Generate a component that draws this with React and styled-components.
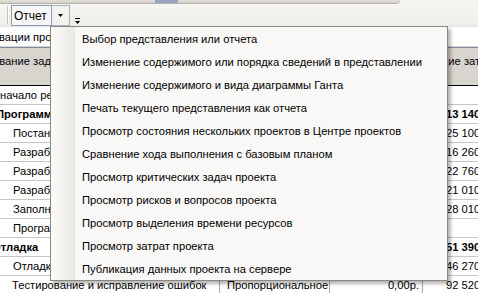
import React from 'react'
import styled, { createGlobalStyle } from 'styled-components'

const GlobalStyle = createGlobalStyle`
  html, body {
    margin: 0;
    padding: 0;
    background: #fff;
  }
  body {
    font-family: 'Liberation Sans', Arial, sans-serif;
    font-size: 11.2px;
    color: #000;
    overflow: hidden;
  }
`

const Screen = styled.div`
  position: relative;
  width: 478px;
  height: 293px;
  overflow: hidden;
  background: #fff;
`

const TopStrip = styled.div`
  height: 4px;
  background: #f4f3ef;
`

const PrevBar = styled.div`
  width: 400px;
  height: 3px;
  background: linear-gradient(#e2e0da, #d3d0c8);
  border-bottom: 1px solid #b5b2a8;
  border-bottom-right-radius: 4px;
  display: flex;
`

const PrevBarMark = styled.div`
  margin-left: 155px;
  width: 23px;
  height: 3px;
  background: #98a3bd;
`

const Toolbar = styled.div`
  height: 21px;
  display: flex;
  align-items: flex-start;
  padding: 1px 0 0 7px;
  background: linear-gradient(#f6f5f1, #eeede8);
  border-bottom: 1px solid #e4e2dc;
`

const Grip = styled.div`
  width: 0;
  height: 18px;
  margin-top: 1px;
  border-left: 1px solid #c6c3b9;
  border-right: 1px solid #fff;
`

const Combo = styled.div`
  margin-left: 2px;
  width: 37px;
  height: 19px;
  padding-left: 2px;
  border: 1px solid #8d9db6;
  background: #f7f7f7;
  display: flex;
  align-items: center;
  font-size: 12px;
`

const DropButton = styled.div`
  width: 17px;
  height: 19px;
  border: 1px solid #a9b2c2;
  border-left: none;
  background: #f3f2ee;
  display: flex;
  align-items: center;
  justify-content: center;
`

const Chevron = styled.div`
  margin: 13px 0 0 4px;
  width: 7px;
  height: 7px;
  display: flex;
`

const Sheet = styled.div`
  display: flex;
  flex-direction: column;
`

const EntryRow = styled.div`
  height: 19px;
  border-bottom: 1px solid #d6d4cf;
  display: flex;
  align-items: center;
  white-space: nowrap;
  overflow: hidden;
`

const HeaderRow = styled.div`
  height: 37px;
  border-top: 1px solid #7d8aa0;
  background: #d8d5cf;
  display: flex;
  white-space: nowrap;
  overflow: hidden;
`

const HeaderCell = styled.div`
  width: ${(p) => p.w}px;
  flex: ${(p) => (p.w ? 'none' : 1)};
  padding-top: 7px;
  padding-left: ${(p) => p.pad || 0}px;
  overflow: hidden;
`

const Row = styled.div`
  height: ${(p) => p.h || 19}px;
  box-sizing: border-box;
  border-bottom: 1px solid #c9c7c2;
  border-top: ${(p) => (p.active ? '1px solid #000' : 'none')};
  display: flex;
  align-items: stretch;
  white-space: nowrap;
  flex: none;
`

const Cell = styled.div`
  width: ${(p) => p.w}px;
  flex: ${(p) => (p.w ? 'none' : 1)};
  box-sizing: border-box;
  display: flex;
  align-items: center;
  justify-content: ${(p) => (p.right ? 'flex-end' : 'flex-start')};
  padding-left: ${(p) => p.indent || 0}px;
  padding-right: ${(p) => (p.right ? 3 : 0)}px;
  border-right: ${(p) => (p.line ? '1px solid #a9a7a2' : 'none')};
  font-weight: ${(p) => (p.bold ? 700 : 400)};
  overflow: hidden;
`

const Shifted = styled.span`
  margin-left: ${(p) => p.shift || 0}px;
`

const Menu = styled.div`
  position: absolute;
  left: 50px;
  top: 26px;
  width: 396px;
  border: 1px solid #8a877e;
  background: #f9f8f6;
  box-shadow: 3px 3px 3px rgba(0, 0, 0, 0.28);
  display: flex;
  flex-direction: column;
`

const MenuItem = styled.div`
  height: 23px;
  display: flex;
  align-items: center;
  background: linear-gradient(90deg, #fbfbf9 0px, #ebe9e3 24px, transparent 24px);
  white-space: nowrap;
`

const MenuText = styled.span`
  padding-left: 31px;
`

const menuItems = [
  'Выбор представления или отчета',
  'Изменение содержимого или порядка сведений в представлении',
  'Изменение содержимого и вида диаграммы Ганта',
  'Печать текущего представления как отчета',
  'Просмотр состояния нескольких проектов в Центре проектов',
  'Сравнение хода выполнения с базовым планом',
  'Просмотр критических задач проекта',
  'Просмотр рисков и вопросов проекта',
  'Просмотр выделения времени ресурсов',
  'Просмотр затрат проекта',
  'Публикация данных проекта на сервере',
]

const rows = [
  { name: 'Программирование', bold: true, shift: -4, cost: '13 140,00р.' },
  { name: 'Постановка задачи', indent: 13, cost: '25 100,00р.' },
  { name: 'Разработка модулей', indent: 13, cost: '16 260,00р.' },
  { name: 'Разработка интерфейса', indent: 13, cost: '22 760,00р.' },
  { name: 'Разработка отчетов', indent: 13, cost: '21 010,00р.' },
  { name: 'Заполнение справочников', indent: 13, cost: '28 010,00р.' },
  { name: 'Программирование завершено', indent: 13, cost: '' },
  { name: 'Отладка', bold: true, shift: -8, cost: '51 390,00р.' },
  { name: 'Отладка модулей', indent: 13, cost: '46 270,00р.' },
]

const ArrowDown = () => (
  <svg width="5" height="3" viewBox="0 0 5 3">
    <path d="M0 0h5L2.5 3z" fill="#000" />
  </svg>
)

const ChevronIcon = () => (
  <svg width="7" height="7" viewBox="0 0 7 7">
    <rect x="1" y="0" width="5" height="1" fill="#000" />
    <path d="M1 3h5L3.5 6z" fill="#000" />
  </svg>
)

export default function App() {
  return (
    <Screen>
      <GlobalStyle />
      <TopStrip>
        <PrevBar>
          <PrevBarMark />
        </PrevBar>
      </TopStrip>
      <Toolbar>
        <Grip />
        <Combo>Отчет</Combo>
        <DropButton>
          <ArrowDown />
        </DropButton>
        <Chevron>
          <ChevronIcon />
        </Chevron>
      </Toolbar>

      <Sheet>
        <EntryRow>
          <Shifted shift={-1}>вации проекта</Shifted>
        </EntryRow>
        <HeaderRow>
          <HeaderCell w={423}>
            <Shifted shift={-20}>Название задачи</Shifted>
          </HeaderCell>
          <HeaderCell pad={1}>Общие затраты</HeaderCell>
        </HeaderRow>
        <Row h={20} active>
          <Cell w={423} line>
            <Shifted>начало реализации</Shifted>
          </Cell>
          <Cell />
        </Row>
        {rows.map((r) => (
          <Row key={r.name}>
            <Cell w={423} line bold={r.bold} indent={r.indent}>
              <Shifted shift={r.shift}>{r.name}</Shifted>
            </Cell>
            <Cell bold={r.bold} indent={23}>
              {r.cost}
            </Cell>
          </Row>
        ))}
        <Row>
          <Cell w={220} line indent={12}>
            Тестирование и исправление ошибок
          </Cell>
          <Cell w={110} line indent={7}>
            Пропорциональное
          </Cell>
          <Cell w={93} line right>
            0,00р.
          </Cell>
          <Cell indent={23}>92 520,00р.</Cell>
        </Row>
      </Sheet>

      <Menu>
        {menuItems.map((t) => (
          <MenuItem key={t}>
            <MenuText>{t}</MenuText>
          </MenuItem>
        ))}
      </Menu>
    </Screen>
  )
}
